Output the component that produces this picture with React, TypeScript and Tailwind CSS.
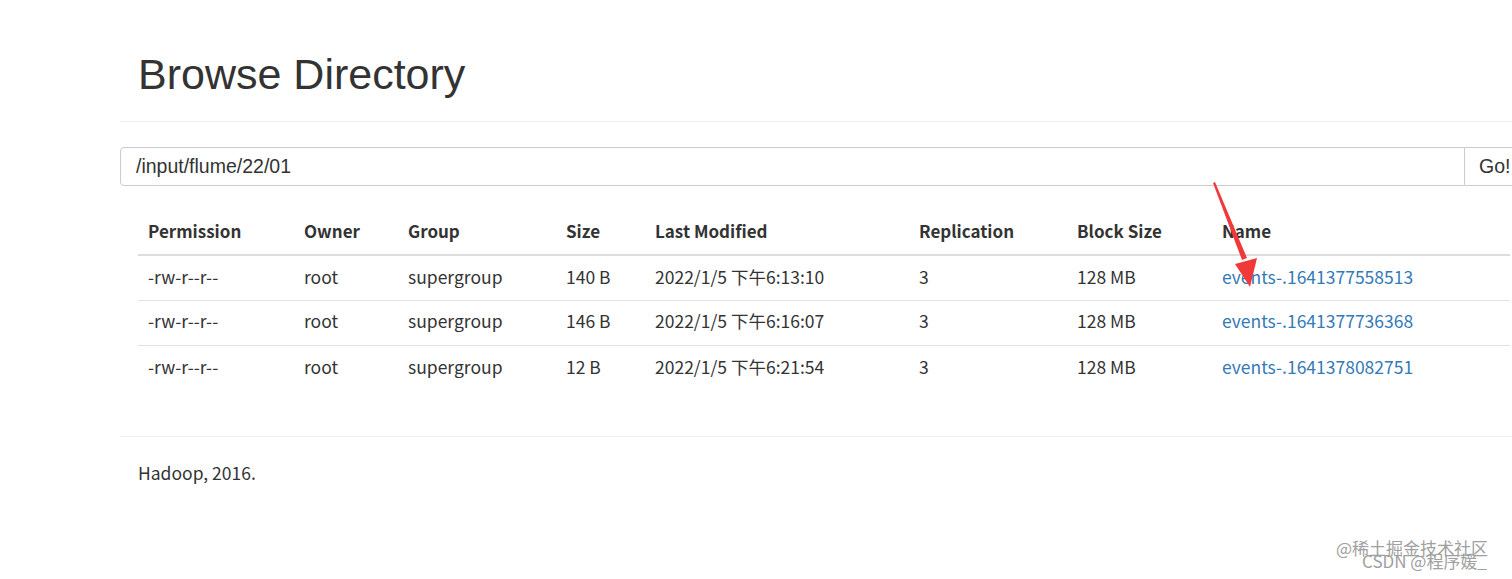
const rows = [
  { perm: "-rw-r--r--", owner: "root", group: "supergroup", size: "140 B", modified: "2022/1/5 下午6:13:10", repl: "3", block: "128 MB", name: "events-.1641377558513" },
  { perm: "-rw-r--r--", owner: "root", group: "supergroup", size: "146 B", modified: "2022/1/5 下午6:16:07", repl: "3", block: "128 MB", name: "events-.1641377736368" },
  { perm: "-rw-r--r--", owner: "root", group: "supergroup", size: "12 B", modified: "2022/1/5 下午6:21:54", repl: "3", block: "128 MB", name: "events-.1641378082751" },
];

const cols = ["Permission", "Owner", "Group", "Size", "Last Modified", "Replication", "Block Size", "Name"];
const widths = ["w-[156px]", "w-[104px]", "w-[158px]", "w-[89px]", "w-[264px]", "w-[158px]", "w-[145px]", ""];

const tableFont = { fontFamily: '"Noto Sans CJK SC", "Noto Sans", sans-serif' };

function Arrow() {
  return (
    <svg className="absolute left-[1205px] top-[178px]" width="60" height="115" viewBox="0 0 60 115">
      <path d="M8 5 L37 82 L42 80 L10 4 Z" fill="#f03a3a" />
      <path d="M30 86 L52 80 L45 109 Z" fill="#f03a3a" />
    </svg>
  );
}

export default function App() {
  return (
    <div className="relative h-[579px] w-[1512px] overflow-hidden bg-white text-[#333]">
      <div className="ml-[120px] w-[1440px]">
        {/* Header */}
        <div className="pb-[22px] pt-[49px] pl-[18px] border-b border-[#eee]">
          <h1 className="text-[43px] leading-[50px] font-normal" style={{ fontFamily: '"Liberation Sans", Arial, sans-serif' }}>
            Browse Directory
          </h1>
        </div>

        {/* Path form */}
        <div className="mt-[25px] flex h-[39px]">
          <div className="flex w-[1345px] items-center rounded-l-[4px] border border-[#ccc] pl-[15px] text-[19.5px]" style={{ fontFamily: '"Liberation Sans", Arial, sans-serif' }}>
            /input/flume/22/01
          </div>
          <div className="flex items-center border border-l-0 border-[#ccc] px-[14px] text-[19.5px]" style={{ fontFamily: '"Liberation Sans", Arial, sans-serif' }}>
            Go!
          </div>
        </div>

        {/* Listing */}
        <div className="mt-[22px] ml-[18px] w-[1372px]" style={tableFont}>
          <table className="w-full border-collapse text-[17.5px]">
            <thead>
              <tr className="border-b-2 border-[#ddd]">
                {cols.map((c, i) => (
                  <th key={c} className={`${widths[i]} h-[47px] px-[10px] text-left align-middle text-[17px] font-bold`}>
                    {c}
                  </th>
                ))}
              </tr>
            </thead>
            <tbody>
              {rows.map((r) => (
                <tr key={r.name} className="border-b border-[#e3e3e3] last:border-b-0">
                  <td className="h-[45px] px-[10px] pb-[2px]">{r.perm}</td>
                  <td className="px-[10px] pb-[2px]">{r.owner}</td>
                  <td className="px-[10px] pb-[2px]">{r.group}</td>
                  <td className="px-[10px] pb-[2px]">{r.size}</td>
                  <td className="px-[10px] pb-[2px]">{r.modified}</td>
                  <td className="px-[10px] pb-[2px]">{r.repl}</td>
                  <td className="px-[10px] pb-[2px]">{r.block}</td>
                  <td className="px-[10px] pb-[2px]">
                    <a className="text-[#337ab7]" href="#">{r.name}</a>
                  </td>
                </tr>
              ))}
            </tbody>
          </table>
        </div>

        {/* Footer */}
        <div className="mt-[46px] border-t border-[#eee] pl-[18px] pt-[23px] text-[17.5px]" style={tableFont}>
          Hadoop, 2016.
        </div>
      </div>

      <Arrow />

      {/* Watermark */}
      <div className="absolute left-[1336px] top-[538px] text-[17px] leading-[20px] text-[#a0a0a0]" style={tableFont}>
        @稀土掘金技术社区
      </div>
      <div className="absolute left-[1362px] top-[551px] text-[17px] leading-[20px] text-[#a0a0a0]" style={tableFont}>
        CSDN @程序媛_
      </div>
    </div>
  );
}
